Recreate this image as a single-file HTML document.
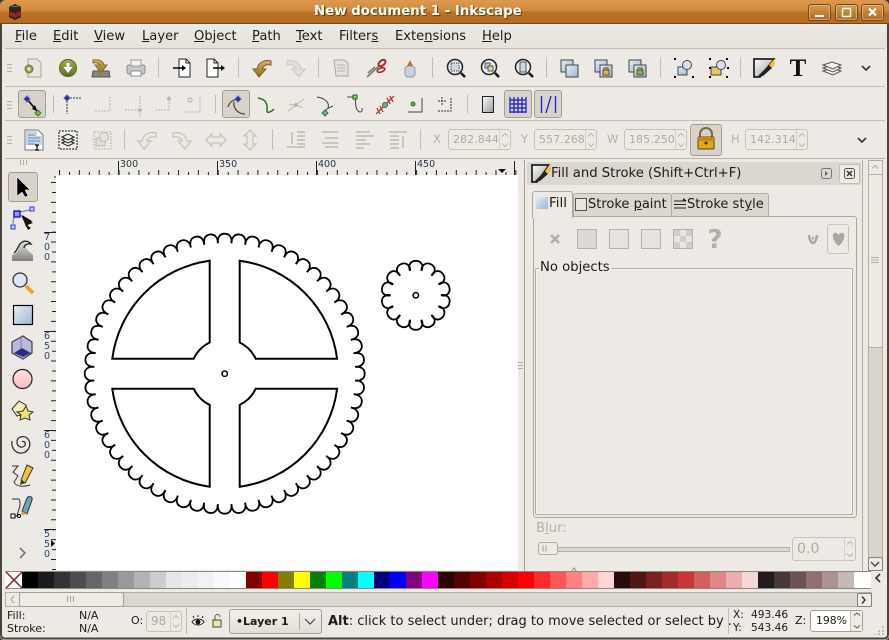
<!DOCTYPE html>
<html><head><meta charset="utf-8"><style>
html,body{margin:0;padding:0;width:889px;height:640px;overflow:hidden;background:#3a3a3a}
#w{position:absolute;left:0;top:0;width:889px;height:640px;background:#edeae5;font-family:"DejaVu Sans",sans-serif;color:#1e1a16;overflow:hidden;border-radius:6px 6px 4px 4px}
.a{position:absolute;white-space:nowrap}
.ln{position:absolute;background:#c5bdb1}
.spin{position:absolute;box-sizing:border-box;border:1px solid #c8c1b6;border-radius:3px;height:24px;font-size:11px;line-height:22px;color:#b2a99d;padding-left:4px;letter-spacing:.05px;white-space:nowrap}
.spin:after{content:"";position:absolute;right:10px;top:0;bottom:0;width:1px;background:#d6d0c7}
.pr{position:absolute;box-sizing:border-box;background:#d8d2ca;border:1px solid #a89e90;border-radius:3px}
.tab{position:absolute;box-sizing:border-box;border:1px solid #b5ab9d;border-bottom:0;border-radius:3px 3px 0 0;background:#dcd7d0;height:24px;font-size:13px;line-height:22px;white-space:nowrap;overflow:hidden}
.sw{float:left;width:16px;height:16px}
.wb{position:absolute;top:4px;width:23px;height:17px;box-sizing:border-box;border:1px solid #6f4a20;border-radius:3px;background:linear-gradient(#d9974f,#b06a20);box-shadow:inset 0 0 0 1px rgba(255,225,180,.45)}
.m{position:absolute;top:28px;font-size:13.1px;line-height:18px;white-space:nowrap}
</style></head><body><div id="w">

<div class="a" style="left:0;top:0;width:889px;height:24px;background:linear-gradient(#dd9a4e 0,#d18a3c 45%,#bb7226 55%,#b46c22 100%);border-bottom:1px solid #6b4a22;box-sizing:border-box"></div>
<div class="a" style="left:314px;top:3px;font-size:13.35px;font-weight:bold;color:#fff;line-height:17px;text-shadow:1px 1px 1px #5a3a10">New document 1 - Inkscape</div>
<div class="wb" style="left:808px"></div><div class="wb" style="left:835px"></div><div class="wb" style="left:861px"></div>

<div class="a" style="left:2px;top:24px;width:885px;height:24px;background:linear-gradient(#edeae5,#e5e1db)"></div>
<div class="m" style="left:15px"><u>F</u>ile</div>
<div class="m" style="left:53px"><u>E</u>dit</div>
<div class="m" style="left:94px"><u>V</u>iew</div>
<div class="m" style="left:142px"><u>L</u>ayer</div>
<div class="m" style="left:194px"><u>O</u>bject</div>
<div class="m" style="left:252px"><u>P</u>ath</div>
<div class="m" style="left:296px"><u>T</u>ext</div>
<div class="m" style="left:339px">Filter<u>s</u></div>
<div class="m" style="left:395px">Exte<u>n</u>sions</div>
<div class="m" style="left:482px"><u>H</u>elp</div>

<div class="ln" style="left:5px;top:48px;width:880px;height:1px"></div>
<div class="ln" style="left:5px;top:86px;width:880px;height:1px"></div>
<div class="ln" style="left:5px;top:120px;width:880px;height:1px"></div>
<div class="ln" style="left:5px;top:158px;width:880px;height:1px;background:#bdb5a9"></div>

<div class="pr" style="left:18px;top:90px;width:28px;height:28px"></div>
<div class="pr" style="left:222px;top:90px;width:28px;height:28px"></div>
<div class="pr" style="left:504px;top:90px;width:28px;height:28px"></div>
<div class="pr" style="left:534px;top:90px;width:28px;height:28px"></div>
<div class="pr" style="left:690px;top:124px;width:32px;height:32px"></div>
<div class="pr" style="left:8px;top:172px;width:30px;height:30px"></div>

<div class="a" style="left:433px;top:132px;font-size:11.5px;line-height:15px;color:#b8afa3">X</div>
<div class="a" style="left:521px;top:132px;font-size:11.5px;line-height:15px;color:#b8afa3">Y</div>
<div class="a" style="left:607px;top:132px;font-size:11.5px;line-height:15px;color:#b8afa3">W</div>
<div class="a" style="left:731px;top:132px;font-size:11.5px;line-height:15px;color:#b8afa3">H</div>
<div class="spin" style="left:448px;top:129px;width:63px;height:21px;line-height:19px">282.844</div>
<div class="spin" style="left:534px;top:129px;width:63px;height:21px;line-height:19px">557.268</div>
<div class="spin" style="left:624px;top:129px;width:63px;height:21px;line-height:19px">185.250</div>
<div class="spin" style="left:745px;top:129px;width:63px;height:21px;line-height:19px">142.314</div>

<div class="a" style="left:56px;top:175px;width:462px;height:395px;background:#fff"></div>
<div class="a" style="left:120px;top:159px;font-size:9.5px;line-height:11px;color:#28364a">300</div>
<div class="a" style="left:219px;top:159px;font-size:9.5px;line-height:11px;color:#28364a">350</div>
<div class="a" style="left:318px;top:159px;font-size:9.5px;line-height:11px;color:#28364a">400</div>
<div class="a" style="left:417px;top:159px;font-size:9.5px;line-height:11px;color:#28364a">450</div>
<div class="a" style="left:44px;top:233px;width:8px;font-size:9.5px;line-height:10px;color:#28487a;white-space:normal">7<br>0<br>0</div>
<div class="a" style="left:44px;top:332px;width:8px;font-size:9.5px;line-height:10px;color:#28487a;white-space:normal">6<br>5<br>0</div>
<div class="a" style="left:44px;top:431px;width:8px;font-size:9.5px;line-height:10px;color:#28487a;white-space:normal">6<br>0<br>0</div>
<div class="a" style="left:44px;top:530px;width:8px;font-size:9.5px;line-height:10px;color:#28487a;white-space:normal">5<br>5<br>0</div>

<div class="a" style="left:527px;top:162px;width:334px;height:23px;background:#dbd6cf"></div>
<div class="a" style="left:551px;top:165px;font-size:13.2px;line-height:18px">Fill and Stroke (Shift+Ctrl+F)</div>
<div class="a" style="left:839px;top:164px;width:21px;height:20px;box-sizing:border-box;background:#eeebe7;border:1px solid #c4bcb0;border-radius:3px"></div>
<div class="ln" style="left:524px;top:160px;width:1px;height:411px;background:#a79e91"></div>
<div class="ln" style="left:862px;top:160px;width:1px;height:411px;background:#b5ad9f"></div>
<div class="tab" style="left:573px;top:193px;width:99px;padding-left:14px">Stroke <u>p</u>aint</div>
<div class="tab" style="left:671px;top:193px;width:98px;padding-left:15px">Stroke st<u>y</u>le</div>
<div class="a" style="left:533px;top:216px;width:324px;height:302px;box-sizing:border-box;border:1px solid #b0a699;border-radius:0 3px 3px 3px"></div>
<div class="a" style="left:532px;top:191px;width:41px;height:27px;box-sizing:border-box;border:1px solid #b0a699;border-bottom:0;border-radius:3px 3px 0 0;background:#edeae5"></div>
<div class="a" style="left:549px;top:193px;font-size:13.5px;line-height:21px">Fill</div>
<div class="a" style="left:535px;top:268px;width:318px;height:247px;box-sizing:border-box;border:1px solid #b5ab9d;border-radius:2px;box-shadow:inset 0 0 0 1px #f6f4f1"></div>
<div class="a" style="left:539px;top:261px;padding:0 1px;background:#edeae5;font-size:13.2px;line-height:13px">No objects</div>
<div class="a" style="left:827px;top:224px;width:22px;height:30px;box-sizing:border-box;border:1px solid #c9c2b7;border-radius:3px"></div>
<div class="a" style="left:536px;top:521px;font-size:13.2px;line-height:16px;color:#b8afa3">B<u>l</u>ur:</div>
<div class="a" style="left:538px;top:547px;width:252px;height:5px;box-sizing:border-box;border:1px solid #b8afa3;background:#dcd7d0"></div>
<div class="a" style="left:538px;top:542px;width:20px;height:13px;box-sizing:border-box;border:1px solid #b5ab9d;border-radius:3px;background:#efece8"></div>
<div class="spin" style="left:792px;top:537px;width:64px;font-size:14px;padding-left:4px;line-height:23px">0.0</div>

<div class="a" style="left:868px;top:160px;width:15px;height:411px;box-sizing:border-box;background:#d9d4cc;border:1px solid #b5ad9f"></div>
<div class="a" style="left:868px;top:160px;width:15px;height:15px;box-sizing:border-box;background:#eeebe7;border:1px solid #b5ad9f"></div>
<div class="a" style="left:868px;top:174px;width:15px;height:174px;box-sizing:border-box;background:#eeebe7;border:1px solid #b5ad9f;border-radius:2px"></div>
<div class="a" style="left:868px;top:557px;width:15px;height:14px;box-sizing:border-box;background:#eeebe7;border:1px solid #8a8175;border-radius:2px"></div>

<div class="a" style="left:5px;top:571px;width:866px;height:18px;box-sizing:border-box;border-top:1px solid #8f8779;border-bottom:1px solid #8f8779;background:#fff;overflow:hidden">
<div style="float:left;width:17px;height:16px"></div>
<div style="width:860px">
<div class="sw" style="background:#000"></div><div class="sw" style="background:#1a1a1a"></div><div class="sw" style="background:#333"></div><div class="sw" style="background:#4d4d4d"></div><div class="sw" style="background:#666"></div><div class="sw" style="background:#808080"></div><div class="sw" style="background:#999"></div><div class="sw" style="background:#b3b3b3"></div><div class="sw" style="background:#ccc"></div><div class="sw" style="background:#e6e6e6"></div><div class="sw" style="background:#ececec"></div><div class="sw" style="background:#f2f2f2"></div><div class="sw" style="background:#f9f9f9"></div><div class="sw" style="background:#fff"></div>
<div class="sw" style="background:#800000"></div><div class="sw" style="background:#f00"></div><div class="sw" style="background:#808000"></div><div class="sw" style="background:#ff0"></div><div class="sw" style="background:#008000"></div><div class="sw" style="background:#0f0"></div><div class="sw" style="background:#008080"></div><div class="sw" style="background:#0ff"></div><div class="sw" style="background:#000080"></div><div class="sw" style="background:#00f"></div><div class="sw" style="background:#800080"></div><div class="sw" style="background:#f0f"></div>
<div class="sw" style="background:#2b0000"></div><div class="sw" style="background:#500"></div><div class="sw" style="background:#800000"></div><div class="sw" style="background:#a00"></div><div class="sw" style="background:#d40000"></div><div class="sw" style="background:#f00"></div><div class="sw" style="background:#ff2a2a"></div><div class="sw" style="background:#f55"></div><div class="sw" style="background:#ff8080"></div><div class="sw" style="background:#faa"></div><div class="sw" style="background:#ffd5d5"></div>
<div class="sw" style="background:#280b0b"></div><div class="sw" style="background:#501616"></div><div class="sw" style="background:#782121"></div><div class="sw" style="background:#a02c2c"></div><div class="sw" style="background:#c83737"></div><div class="sw" style="background:#d35f5f"></div><div class="sw" style="background:#de8787"></div><div class="sw" style="background:#e9afaf"></div><div class="sw" style="background:#f4d7d7"></div>
<div class="sw" style="background:#241c1c"></div><div class="sw" style="background:#483737"></div><div class="sw" style="background:#6c5353"></div><div class="sw" style="background:#916f6f"></div><div class="sw" style="background:#ac9393"></div><div class="sw" style="background:#c8b7b7"></div><div class="sw" style="background:#e3dbdb"></div>
</div></div>

<div class="a" style="left:5px;top:592px;width:867px;height:15px;box-sizing:border-box;background:#dbd6ce;border:1px solid #b5ad9f"></div>
<div class="a" style="left:5px;top:592px;width:15px;height:15px;box-sizing:border-box;background:#eeebe7;border:1px solid #b5ad9f;border-radius:2px"></div>
<div class="a" style="left:19px;top:592px;width:105px;height:15px;box-sizing:border-box;background:#eeebe7;border:1px solid #a89e90;border-radius:2px"></div>
<div class="a" style="left:857px;top:593px;width:15px;height:14px;box-sizing:border-box;background:#eeebe7;border:1px solid #8a8175;border-radius:2px"></div>

<div class="a" style="left:7px;top:609px;font-size:11px;line-height:13px">Fill:</div>
<div class="a" style="left:7px;top:622px;font-size:11px;line-height:13px">Stroke:</div>
<div class="a" style="left:79px;top:609px;font-size:11px;line-height:13px">N/A</div>
<div class="a" style="left:79px;top:622px;font-size:11px;line-height:13px">N/A</div>
<div class="a" style="left:131px;top:614px;font-size:11px;line-height:14px">O:</div>
<div class="spin" style="left:146px;top:611px;width:36px;height:21px;line-height:19px;font-size:12px">98</div>
<div class="ln" style="left:186px;top:608px;width:1px;height:26px"></div>
<div class="a" style="left:229px;top:609px;width:93px;height:25px;box-sizing:border-box;border:1px solid #a89e90;border-radius:3px;background:linear-gradient(#f2efeb,#e2ded7)"></div>
<div class="a" style="left:299px;top:613px;width:1px;height:17px;background:#b5ad9f"></div>
<div class="a" style="left:236px;top:614px;font-size:11px;font-weight:bold;line-height:15px">•Layer 1</div>
<div class="a" style="left:328px;top:613px;font-size:13px;line-height:18px"><b>Alt</b>: click to select under; drag to move selected or select by .</div>
<div class="ln" style="left:728px;top:608px;width:1px;height:26px"></div>
<div class="a" style="left:733px;top:608px;font-size:10.6px;line-height:14px">X:</div>
<div class="a" style="left:733px;top:621px;font-size:10.6px;line-height:14px">Y:</div>
<div class="a" style="left:751px;top:608px;font-size:10.6px;line-height:14px">493.46</div>
<div class="a" style="left:751px;top:621px;font-size:10.6px;line-height:14px">543.46</div>
<div class="a" style="left:795px;top:614px;font-size:11px;line-height:14px">Z:</div>
<div class="a" style="left:810px;top:610px;width:53px;height:22px;box-sizing:border-box;border:1px solid #a89e90;border-radius:3px;background:#fff;font-size:10.8px;line-height:20px;padding-left:5px">198%<span style="position:absolute;right:0;top:0;bottom:0;width:11px;background:#eeebe7;border-left:1px solid #c8c1b6"></span></div>

<svg class="a" style="left:0;top:0" width="889" height="640" viewBox="0 0 889 640" fill="none">
<defs>
<linearGradient id="b" x1="0" y1="0" x2="1" y2="1"><stop offset="0" stop-color="#e6edf5"/><stop offset="1" stop-color="#9db6d3"/></linearGradient>
<linearGradient id="g1" x1="0" y1="0" x2="0" y2="1"><stop offset="0" stop-color="#a2ad62"/><stop offset="1" stop-color="#5e6d22"/></linearGradient>
<linearGradient id="o1" x1="0" y1="0" x2="0" y2="1"><stop offset="0" stop-color="#d9b66a"/><stop offset="1" stop-color="#8f6c23"/></linearGradient>
<linearGradient id="gr" x1="0" y1="0" x2="1" y2="1"><stop offset="0" stop-color="#fff"/><stop offset="1" stop-color="#999"/></linearGradient>
<linearGradient id="pk" x1="0" y1="0" x2="0" y2="1"><stop offset="0" stop-color="#fbe4e6"/><stop offset="1" stop-color="#fbb8c0"/></linearGradient>
<linearGradient id="wv" x1="0" y1="0" x2="0" y2="1"><stop offset="0" stop-color="#e4e2de"/><stop offset="1" stop-color="#808080"/></linearGradient>
<path id="t" d="M-6.85,-130.5C-7.4,-136 -5,-140 0,-140C5,-140 7.4,-136 6.85,-130.500" stroke="#000" stroke-width="1.800" stroke-linejoin="round"/>
<g id="t5"><use href="#t"/><use href="#t" transform="rotate(6)"/><use href="#t" transform="rotate(12)"/><use href="#t" transform="rotate(18)"/><use href="#t" transform="rotate(24)"/></g>
<path id="s" d="M-5.6,-24.5C-8,-29 -6,-34.5 0,-34.5C6,-34.5 8,-29 5.6,-24.5" stroke="#000" stroke-width="1.800" stroke-linejoin="round"/>
<path id="q" d="M-15,-113L-15,-31.2A34.5 34.5 0 0 0 -31,-15L-112.4,-15A113.4 113.4 0 0 1 -15,-113Z" stroke="#000" stroke-width="2" fill="#fff"/>
<path id="grip" d="M-2,-3.5h5M-2,0h5M-2,3.5h5" stroke="#b5ad9f"/>
<path id="chev" d="M-4,-2L0,2L4,-2" stroke="#333" stroke-width="1.6"/>
<path id="ca" d="M-3,1.5L0,-1.5L3,1.5" stroke="#bdb5a9"/>
</defs>

<!-- canvas drawing -->
<g transform="translate(224.7,373.7)">
<use href="#t5"/><use href="#t5" transform="rotate(30)"/><use href="#t5" transform="rotate(60)"/><use href="#t5" transform="rotate(90)"/><use href="#t5" transform="rotate(120)"/><use href="#t5" transform="rotate(150)"/><use href="#t5" transform="rotate(180)"/><use href="#t5" transform="rotate(210)"/><use href="#t5" transform="rotate(240)"/><use href="#t5" transform="rotate(270)"/><use href="#t5" transform="rotate(300)"/><use href="#t5" transform="rotate(330)"/>
<use href="#q"/><use href="#q" transform="scale(-1,1)"/><use href="#q" transform="scale(1,-1)"/><use href="#q" transform="scale(-1,-1)"/>
<circle r="2.7" stroke="#000" stroke-width="1.5"/>
</g>
<g transform="translate(415.8,295.3)">
<use href="#s"/><use href="#s" transform="rotate(25.71)"/><use href="#s" transform="rotate(51.43)"/><use href="#s" transform="rotate(77.14)"/><use href="#s" transform="rotate(102.86)"/><use href="#s" transform="rotate(128.57)"/><use href="#s" transform="rotate(154.29)"/><use href="#s" transform="rotate(180)"/><use href="#s" transform="rotate(205.71)"/><use href="#s" transform="rotate(231.43)"/><use href="#s" transform="rotate(257.14)"/><use href="#s" transform="rotate(282.86)"/><use href="#s" transform="rotate(308.57)"/><use href="#s" transform="rotate(334.29)"/>
<circle r="2.7" stroke="#000" stroke-width="1.5"/>
</g>

<!-- rulers -->
<g stroke="#222">
<line x1="59" y1="172.5" x2="518" y2="172.5" stroke-width="5" stroke-dasharray="1 18.84"/>
<line x1="69" y1="173.5" x2="518" y2="173.5" stroke-width="3" stroke-dasharray="1 18.84"/>
<path d="M118.5,161V175M217.5,161V175M316.5,161V175M415.5,161V175M514.5,161V175" stroke-width="1"/>
<line x1="53.5" y1="182" x2="53.5" y2="570" stroke-width="5" stroke-dasharray="1 18.84"/>
<line x1="54" y1="192" x2="54" y2="570" stroke-width="4" stroke-dasharray="1 18.84"/>
<path d="M44,232.5H56M44,331.5H56M44,430.5H56M44,529.5H56" stroke-width="1"/>
</g>
<path d="M498,169h8l-4,4zM51,540v7l4,-3.500z" fill="#111"/>
<path d="M56,177h-2" stroke="#222"/>

<!-- title icon -->
<g transform="translate(15,12)"><path d="M-6,-5L0,-8L6,-5V5L0,8L-6,5Z" fill="#2a2422"/><path d="M-6,-1L0,1.500L6,-1V3L0,6L-6,3Z" fill="#8c2a22"/><path d="M-3,-5.500h6" stroke="#776"/></g>
<!-- window buttons -->
<path d="M815,16h9" stroke="#fff" stroke-width="2"/>
<rect x="842.500" y="8.500" width="8" height="8" stroke="#fff" stroke-width="1.500"/>
<path d="M869,8.500l7,7M876,8.500l-7,7" stroke="#fff" stroke-width="2.200"/>

<!-- grips -->
<use href="#grip" x="9" y="68"/><use href="#grip" x="9" y="105"/><use href="#grip" x="9" y="140"/>
<path d="M20.500,160v5M23.500,160v5M26.500,160v5" stroke="#b5ad9f"/>
<path d="M518,362.500h5M518,365.500h5M518,368.500h5" stroke="#b5ad9f"/>
<!-- separators -->
<path d="M158.500,57v21M238.500,57v21M318.500,57v21M432.500,57v21M546.500,57v21M660.500,57v21M740.500,57v21M53.500,95v18M215.500,95v18M467.500,95v18M124.500,129v21M272.500,129v21M420.500,129v21" stroke="#c5bdb1"/>

<!-- toolbar 1 -->
<g transform="translate(33,68)"><path d="M-5,-9H4L8,-5V9H-5Z" fill="#e8e6e2" stroke="#a8a59e"/><circle cx="-4" cy="1" r="4" fill="#8da04a" stroke="#6d7a30"/><path d="M-4,-1v4M-6,1h4" stroke="#fff"/></g>
<g transform="translate(68,68)"><circle r="8.500" fill="url(#g1)" stroke="#5a6420"/><path d="M-1.500,-5h3v4h3L0,5L-4.500,-1h3Z" fill="#fff"/></g>
<g transform="translate(101,68)"><path d="M-8,3H8L9,9H-9Z" fill="#8a857c" stroke="#555"/><path d="M-8,-8C-2,-9 2,-7 3,-3H6L0,5L-6,-3H-1C-2,-5 -5,-6 -8,-5Z" fill="url(#o1)" stroke="#8a6c2d"/></g>
<g transform="translate(136,68)"><rect x="-9" y="-3" width="18" height="9" rx="2" fill="#c7c9cb" stroke="#8a8c8e"/><rect x="-5" y="-8" width="10" height="6" fill="#f3f3f3" stroke="#9a9a9a"/><rect x="-5" y="3" width="10" height="5" fill="#fff" stroke="#8a8c8e"/></g>
<g transform="translate(181,68)"><path d="M-2,-9H5L9,-5V9H-2Z" fill="#fff" stroke="#222"/><path d="M5,-9V-5H9" stroke="#222"/><path d="M-8,0H2" stroke="#000" stroke-width="1.500"/><path d="M1,-3L5,0L1,3Z" fill="#000"/></g>
<g transform="translate(215,68)"><path d="M-8,-9H-1L3,-5V9H-8Z" fill="#fff" stroke="#222"/><path d="M-1,-9V-5H3" stroke="#222"/><path d="M-2,0H7" stroke="#000" stroke-width="1.500"/><path d="M6,-3L10,0L6,3Z" fill="#000"/></g>
<g transform="translate(262,68)"><path d="M-3,9L-9,1H-5C-4,-5 2,-9 9,-7V-3C4,-4 1,-2 0,1H4Z" fill="url(#o1)" stroke="#7c5c18"/></g>
<g transform="translate(296,68)"><path d="M3,9L9,1H5C4,-5 -2,-9 -9,-7V-3C-4,-4 -1,-2 0,1H-4Z" fill="#e2dfda" stroke="#ccc8c0"/></g>
<g transform="translate(341,68)" stroke="#aaa69e"><path d="M-7,-8H3L7,-5V8H-5Z" fill="#e5e3df"/><path d="M-4,-3h8M-4,0h8M-4,3h8" stroke="#b5b2ab"/></g>
<g transform="translate(376,68)"><path d="M-9,9L3,-2M-8,5L-1,-1" stroke="#777" stroke-width="1.600"/><ellipse cx="6" cy="-5" rx="4" ry="2.500" transform="rotate(-40 6 -5)" stroke="#b02a2a" stroke-width="2"/><ellipse cx="5" cy="2" rx="4" ry="2" transform="rotate(-20 5 2)" stroke="#b02a2a" stroke-width="1.600"/></g>
<g transform="translate(410,68)"><rect x="-5" y="-2" width="10" height="11" rx="3" fill="#c6d2dd" stroke="#8b99a6"/><path d="M-3,-2L0,-8L3,-2Z" fill="#c26f2a"/></g>
<g transform="translate(456,68)"><circle cx="-1" cy="-1" r="7.500" fill="#e6edf5" stroke="#222" stroke-width="1.500"/><rect x="-5" y="-5" width="8" height="8" fill="#cfd9e4" stroke="#444" stroke-dasharray="1.500 1"/><path d="M5,5L9,9" stroke="#111" stroke-width="2.500"/></g>
<g transform="translate(490,68)"><circle cx="-1" cy="-1" r="7.500" fill="#e6edf5" stroke="#222" stroke-width="1.500"/><rect x="-5" y="-5" width="5" height="5" fill="#bccbdb" stroke="#555"/><rect x="-2" y="-2" width="5" height="5" fill="#ecd28a" stroke="#555"/><path d="M5,5L9,9" stroke="#111" stroke-width="2.500"/></g>
<g transform="translate(524,68)"><circle cx="-1" cy="-1" r="7.500" fill="#e6edf5" stroke="#222" stroke-width="1.500"/><rect x="-4" y="-6" width="6" height="10" fill="#cfd9e4" stroke="#555"/><path d="M5,5L9,9" stroke="#111" stroke-width="2.500"/></g>
<g transform="translate(570,68)"><rect x="-9" y="-8" width="12" height="12" fill="url(#b)" stroke="#444"/><rect x="-4" y="-3" width="12" height="12" fill="url(#b)" stroke="#444"/></g>
<g transform="translate(604,68)"><rect x="-9" y="-8" width="12" height="12" fill="url(#b)" stroke="#444"/><rect x="-4" y="-3" width="12" height="12" fill="url(#b)" stroke="#444"/><rect x="-1" y="2" width="6" height="5" fill="#eab62b" stroke="#6a4f10"/><path d="M0,2V0h4v2" stroke="#444"/></g>
<g transform="translate(638,68)"><rect x="-9" y="-8" width="12" height="12" fill="url(#b)" stroke="#444"/><rect x="-4" y="-3" width="12" height="12" fill="url(#b)" stroke="#444"/><rect x="-1" y="2" width="6" height="5" fill="#83b04a" stroke="#3f5f10"/><path d="M0,2V0h4v2" stroke="#444"/></g>
<g transform="translate(684,68)"><path d="M-6,-1H3V7H-6Z" fill="url(#b)" stroke="#444"/><circle cx="3" cy="-3" r="4.500" fill="#d5e2ee" stroke="#445"/><path d="M-10,-9h2M-10,9h2M8,9h2" stroke="#000" stroke-width="2"/></g>
<g transform="translate(718,68)"><path d="M-7,-1H3V7H-7Z" fill="#e8c564" stroke="#444"/><circle cx="3" cy="-3" r="4.500" fill="#d5e2ee" stroke="#445"/><path d="M-9,-9h2M-9,9h2M8,9h2M8,-9h2M9,0h2M-9,0h2" stroke="#000" stroke-width="2"/></g>
<g transform="translate(764,68)"><path d="M-10,-9H10L-4,9H-10Z" fill="url(#gr)" stroke="#000" stroke-width="1.500"/><path d="M-6,8L5,-3L8,0L-1,8Z" fill="#222"/><path d="M5,-3L10,-9L11,-4L8,0Z" fill="#f0c230"/></g>
<text x="798" y="76" font-family="Liberation Serif,serif" font-weight="bold" font-size="25" text-anchor="middle" fill="#111">T</text>
<g transform="translate(832,68)" stroke="#555" fill="#f4f3f0"><path d="M-9,3L0,0L9,3L1,7Z"/><path d="M-9,0L0,-3L9,0L1,4Z"/><path d="M-9,-3L0,-6L9,-3L1,1Z"/></g>
<use href="#chev" x="866" y="68"/><use href="#chev" x="862" y="140"/>

<!-- toolbar 2 -->
<g transform="translate(32,105)"><path d="M-5,-6L5,6" stroke="#000" stroke-width="1.500"/><path d="M5,6L0,4L3,0Z" fill="#000"/><path d="M-5,-9L-2,-6L-5,-3L-8,-6Z" fill="#22c" stroke="#669"/><path d="M6,5L9,8L6,11L3,8Z" fill="#8bb04a" stroke="#3a7a3a"/></g>
<g transform="translate(68,105)"><path d="M0,-7H14M0,-7V9" stroke="#333" stroke-dasharray="2 1" transform="translate(-1,0)"/><path d="M-1,-10L2,-7L-1,-4L-4,-7Z" fill="#22c" stroke="#669"/></g>
<g stroke="#bbb5ab" stroke-dasharray="2 1" fill="#ccc">
<path d="M95,111H110V96" fill="none"/>
<path d="M125,110H140M140,96V118" fill="none"/>
<path d="M155,110H169M169,96V110" fill="none"/>
<path d="M185,112H200V96" fill="none"/>
</g>
<circle cx="140" cy="110" r="2" fill="#bbb"/><circle cx="169" cy="99" r="2" fill="#bbb"/><circle cx="190" cy="100" r="2" fill="none" stroke="#aaa"/>
<g transform="translate(236,105)"><path d="M-8,2C-6,-5 0,-6 2,-5M-2,-3C-3,2 1,9 9,9" stroke="#444" stroke-width="1.200"/><path d="M2,-9L5,-6L2,-3L-1,-6Z" fill="#22c" stroke="#669"/></g>
<g transform="translate(266,105)"><path d="M-8,-7C-1,-6 2,-2 1,6C1,8 4,8 8,4" stroke="#187a18" stroke-width="1.500"/></g>
<g transform="translate(296,105)"><path d="M-8,6L8,-6M-7,-1C-3,0 3,0 7,3" stroke="#bbb5ab"/><circle r="2" fill="#bbb5ab"/></g>
<g transform="translate(325,105)"><path d="M-8,-8C0,-7 5,-2 3,3M-1,8C0,4 4,3 8,1" stroke="#444"/><path d="M0,5L3,8L0,11L-3,8Z" fill="#7aa6b0" stroke="#2a7a2a"/></g>
<g transform="translate(355,105)"><path d="M-8,-8L0,-8C1,-1 0,2 3,6C5,8 8,7 7,3" stroke="#444"/><rect x="-2" y="-10" width="4" height="4" fill="#9c6" stroke="#161"/></g>
<g transform="translate(385,105)"><path d="M-9,9L9,-9" stroke="#444"/><path d="M-8,3l3,6M-5,1l3,6M2,-7l3,6M5,-9l3,6" stroke="#d22" stroke-width="1.300"/><circle r="2.500" fill="#7aa6b0" stroke="#2a7a2a"/></g>
<g transform="translate(415,105)"><path d="M-7,7H7V-7" stroke="#444"/><circle cx="-2" cy="-1" r="2" fill="#7ab04a" stroke="#2a6a2a"/></g>
<g transform="translate(445,105)"><path d="M-7,-4H2M-3,-8V0M-7,6H6V-8" stroke="#333" stroke-dasharray="2 1"/></g>
<rect x="482.500" y="96.500" width="11" height="16" fill="url(#gr)" stroke="#222"/>
<g stroke="#1414e0" stroke-width="1.200"><path d="M510,97V113M514,97V113M518,97V113M522,97V113M526,97V113M510,100H526M510,104H526M510,108H526M510,112H526"/></g>
<path d="M541.500,96V113M555.500,96V113M546,113L551,96" stroke="#1a1ae0" stroke-width="1.300"/>

<!-- toolbar 3 -->
<g transform="translate(34,140)"><path d="M-9,-10H4L9,-5V10H-9Z" fill="#fff" stroke="#777"/><path d="M-8,-9H3V-4H8V5H-8Z" fill="#c4d6e8"/><path d="M-6,-5H1M-6,-2H6M-6,1H6M-6,4H1" stroke="#6c8fb4"/><path d="M1,5h4M1,10h4M3,5v5" stroke="#000" stroke-width="1.200"/></g>
<g transform="translate(68,140)"><rect x="-9" y="-9" width="18" height="18" fill="#f2f0ec" stroke="#111" stroke-dasharray="2 1"/><g stroke="#222" fill="#eee"><path d="M-6,3L0,0L6,3L0,6Z"/><path d="M-6,0L0,-3L6,0L0,3Z"/><path d="M-6,-3L0,-6L6,-3L0,0Z"/></g></g>
<g transform="translate(102,140)" stroke="#bfb9af"><rect x="-8" y="-8" width="17" height="17" stroke-dasharray="2 1"/><rect x="-6" y="-2" width="9" height="8" fill="#e0ddd7"/><circle cx="2" cy="-3" r="4.500" fill="#e6e3de"/></g>
<g stroke="#c8c3ba" fill="#ece9e4" stroke-width="1.300">
<path transform="translate(147,140)" d="M-3,9L-9,1H-5C-4,-5 2,-9 9,-7V-3C4,-4 1,-2 0,1H4Z"/>
<path transform="translate(182,140)" d="M3,9L9,1H5C4,-5 -2,-9 -9,-7V-3C-4,-4 -1,-2 0,1H-4Z"/>
<path transform="translate(216,140)" d="M-10,0L-4,-6V-3H4V-6L10,0L4,6V3H-4V6Z"/>
<path transform="translate(250,140)" d="M0,-10L6,-4H3V4H6L0,10L-6,4H-3V-4H-6Z"/>
</g>
<g stroke="#bfb9af" stroke-width="1.500" fill="none">
<path d="M287,147h18M292,132v12M297,132h8M297,136h8M297,140h8M297,144h8"/>
<path d="M322,132h16M325,138h13M322,143h16M325,147h13"/>
<path d="M356,132h14M356,136h18M356,140h10M356,144h14M356,148h8"/>
<path d="M389,132h18M403,136v12M390,136h9M390,140h9M390,144h9M390,148h9"/>
</g>
<g><path d="M700,137v-3a6,6 0 0 1 12,0v3" stroke="#7a6a40" stroke-width="2"/><rect x="698" y="137" width="16" height="12" rx="1" fill="#e0a81f" stroke="#5a4510"/><rect x="698" y="137" width="16" height="4" fill="#c2881a"/><circle cx="706" cy="143" r="1.500" fill="#4a3510"/></g>
<use href="#ca" x="505" y="135"/><use href="#ca" transform="matrix(1 0 0 -1 505 145)"/>
<use href="#ca" x="591" y="135"/><use href="#ca" transform="matrix(1 0 0 -1 591 145)"/>
<use href="#ca" x="681" y="135"/><use href="#ca" transform="matrix(1 0 0 -1 681 145)"/>
<use href="#ca" x="802" y="135"/><use href="#ca" transform="matrix(1 0 0 -1 802 145)"/>
<use href="#ca" x="850" y="543"/><use href="#ca" transform="matrix(1 0 0 -1 850 555)"/>
<use href="#ca" x="176" y="617"/><use href="#ca" transform="matrix(1 0 0 -1 176 626)"/>
<path d="M854,615.500l3,-2.500l3,2.500M854,625.500l3,2.500l3,-2.500" stroke="#555"/>

<!-- left tools -->
<g transform="translate(22,187)"><path d="M-5,-10V9L0,5L3,10L6,9L3,3H8Z" fill="#000" stroke="#fff" stroke-width=".5"/></g>
<g transform="translate(22,219)"><path d="M-5,-5C-9,-2 -9,2 -9,5M-3,-7L8,-9" stroke="#777"/><rect x="-8" y="-8" width="6" height="6" fill="#99f" stroke="#00e" stroke-width="1.300"/><rect x="8" y="-12" width="4" height="4" fill="#ccf" stroke="#33e"/><rect x="-11" y="6" width="4" height="4" fill="#ccf" stroke="#33e"/><path d="M-1,-4L11,4L5,6L9,9L6,11Z" fill="#111"/><path d="M0,-4L10,2L4,8Z" fill="#111"/></g>
<g transform="translate(22,251)"><path d="M-10,10V4C-6,3 -3,0 -3,-5C-2,-9 4,-11 8,-8C5,-8 3,-6 4,-3C6,0 9,2 11,4V10Z" fill="url(#wv)"/><path d="M-8,2C-4,-1 -4,-6 -1,-8C2,-11 7,-10 9,-7C6,-8 2,-6 2,-3" stroke="#222" stroke-width="1.300"/></g>
<g transform="translate(22,283)"><circle cx="-2" cy="-3" r="7" fill="#dbe7f2" stroke="#334" stroke-width="1.300"/><path d="M4,3L11,10" stroke="#f0a020" stroke-width="3.500"/></g>
<rect x="13.500" y="305.500" width="19" height="19" fill="url(#b)" stroke="#000" stroke-width="1.200"/>
<g transform="translate(22,347)"><path d="M-10,-5L1,-11L10,-5V6L1,12L-10,6Z" fill="#b9b9d8" stroke="#444" stroke-width="1.200"/><path d="M-8,6L0,1L9,6L1,10Z" fill="#2c2c82"/><path d="M-1,-9V1" stroke="#7a7ab0"/></g>
<circle cx="22.500" cy="379" r="9.500" fill="url(#pk)" stroke="#222" stroke-width="1.200"/>
<g transform="translate(22,411)"><path d="M-10,-2L-3,-10L4,-6L2,3L-5,5Z" fill="#f5eeb5" stroke="#333"/><path d="M4,-5L6,0L11,1L7,4L8,9L3,7L-2,9L-1,4L-5,1L1,0Z" fill="#f6e472" stroke="#333"/></g>
<g transform="translate(22,443)"><path d="M0,-1C2,-3 4,0 3,2C1,6 -5,4 -5,-1C-5,-7 3,-8 6,-4C10,1 7,9 0,10C-7,11 -11,4 -10,-2" stroke="#333" stroke-width="1.300"/></g>
<g transform="translate(22,476)"><path d="M-10,-10H-4L-9,-4L-4,0L-8,6C-6,11 2,11 8,9" stroke="#333"/><path d="M-1,4L5,-11L11,-8L3,7Z" fill="#f2c23a" stroke="#333"/><path d="M-1,4L-2,9L3,7Z" fill="#333"/></g>
<g transform="translate(22,508)"><path d="M-10,-9H-3C0,-4 -4,3 -5,8M-5,8H-9" stroke="#333"/><rect x="-11" y="6" width="4" height="4" fill="#fff" stroke="#000"/><circle cx="-3" cy="8" r="1.500" fill="#fff" stroke="#000"/><path d="M0,3L5,-10C7,-13 11,-11 10,-8L5,6Z" fill="#6fa3c2" stroke="#333"/><path d="M0,3L-1,7L5,6Z" fill="#d9a030"/></g>
<path d="M20,548L25,553L20,558" stroke="#777" stroke-width="1.600"/>

<!-- dock -->
<g transform="translate(541,173)"><path d="M-9,-8H8L-4,9H-9Z" fill="url(#gr)" stroke="#000" stroke-width="1.500"/><path d="M-6,8L4,-2L7,1L-1,8Z" fill="#222"/><path d="M4,-2L9,-9L10,-4L7,1Z" fill="#f0c230"/></g>
<rect x="821.500" y="168.500" width="10" height="10" rx="2" stroke="#777"/><path d="M825,171v5l3,-2.500z" fill="#666"/>
<rect x="844.500" y="168.500" width="10" height="10" rx="2" stroke="#555"/><path d="M847,171l5,5M852,171l-5,5" stroke="#333" stroke-width="1.500"/>
<rect x="536" y="197" width="12" height="12" fill="url(#b)"/>
<rect x="575.500" y="198.500" width="11" height="12" fill="#e8e5e0" stroke="#555"/>
<path d="M674,201h12M674,204.500h12M674,208h12" stroke="#222"/><path d="M683,198l4,3l-4,0z" fill="#222"/>
<path d="M551,235l8,8M559,235l-8,8" stroke="#b3aea6" stroke-width="2.600"/>
<rect x="577.500" y="229.500" width="19" height="19" fill="#dcdad7" stroke="#b5b0a8"/>
<rect x="609.500" y="229.500" width="19" height="19" fill="#e6e4e0" stroke="#b5b0a8"/>
<rect x="641.500" y="229.500" width="19" height="19" fill="#e6e4e0" stroke="#b5b0a8"/>
<rect x="673.500" y="229.500" width="19" height="19" fill="#e8e6e2" stroke="#b5b0a8"/>
<path d="M674,230h6v6h-6zM686,230h6v6h-6zM680,236h6v6h-6zM674,242h6v6h-6zM686,242h6v6h-6z" fill="#d0cdc8"/>
<text x="715" y="248" font-family="DejaVu Sans,sans-serif" font-weight="bold" font-size="26" text-anchor="middle" fill="#b3aea6">?</text>
<path d="M809,235c0,3 2,8 4,8s4,-5 4,-8M812,238h2" stroke="#aca79f" stroke-width="2.500"/>
<path d="M834,233c3,-1 4,1 4.500,2c.5,-1 2,-3 4.500,-2c3,2 1,9 -4.500,13c-5,-4 -7,-11 -4.500,-13z" fill="#aca79f"/>
<path d="M543,545.500v6M546,545.500v6" stroke="#a89e90"/>
<path d="M572,571l2,-3l2,3" stroke="#8f8779"/>
<!-- scroll arrows -->
<path d="M872,168.500l3,-3l3,3" stroke="#b3aba0"/>
<path d="M871,562l4,4l4,-4" stroke="#444" stroke-width="1.400"/>
<path d="M871,257.500h8M871,260h8M871,262.500h8" stroke="#b5ad9f"/>
<path d="M880,574l-4,4l4,4" stroke="#333" stroke-width="1.600"/>
<path d="M14,596l-3,3.500l3,3.500" stroke="#b3aba0" stroke-width="1.300"/>
<path d="M67.500,596v6M70.500,596v6M73.500,596v6" stroke="#a89e90"/>
<path d="M862,596.500l3,3.500l-3,3.500" stroke="#333" stroke-width="1.400"/>
<!-- palette X -->
<rect x="6" y="572" width="16" height="16" fill="#fff"/>
<path d="M6,572L22,588M22,572L6,588" stroke="#7a2a2a" stroke-width="1.500"/>
<!-- status icons -->
<g transform="translate(198,621)"><path d="M-6,1C-3,-3 3,-3 6,1C3,5 -3,5 -6,1Z" fill="#fff" stroke="#222"/><circle cy="1" r="2.500" fill="#111"/><path d="M-4,-3l-1,-2M0,-4v-2M4,-3l1,-2" stroke="#222"/></g>
<g transform="translate(217,621)"><path d="M-2,-1V-4a2.500,2.500 0 0 1 5,0" stroke="#555"/><rect x="-4" y="-1" width="8" height="7" fill="#f2e6a8" stroke="#444"/></g>
<path d="M305,619l5,5l5,-5" stroke="#444" stroke-width="1.200"/>
<g fill="#c3bcb1"><rect x="882" y="626" width="2" height="2"/><rect x="878" y="630" width="2" height="2"/><rect x="882" y="630" width="2" height="2"/><rect x="874" y="634" width="2" height="1"/><rect x="878" y="633" width="2" height="2"/><rect x="882" y="633" width="2" height="2"/></g>
<!-- window frame -->
<path d="M1,24V634Q1,638.500 5,638.500H884Q888,638.500 888,634V24" stroke="#4a4438" stroke-width="2"/>
</svg>
</div></body></html>
